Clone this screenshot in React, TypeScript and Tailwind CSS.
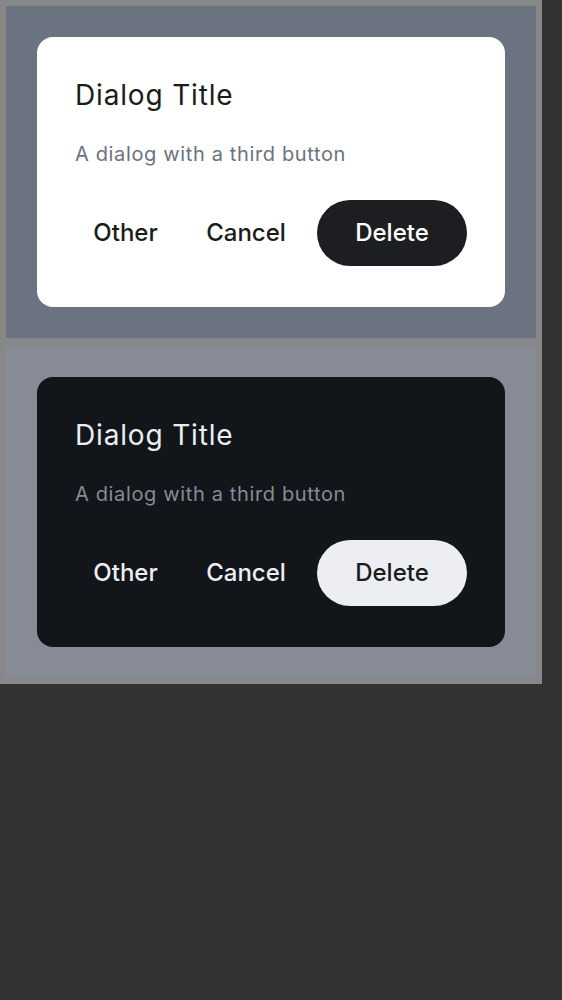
import React from 'react';

type DialogProps = {
  dark?: boolean;
};

function DialogCard({ dark }: DialogProps) {
  const label = dark ? 'text-[#eceef2]' : 'text-[#1b1c20]';
  return (
    <div
      className={`w-full h-[270px] rounded-[16px] pt-[40px] px-[38px] ${
        dark ? 'bg-[#12151a]' : 'bg-white'
      }`}
    >
      <h2 className={`text-[28px] leading-[36px] font-normal tracking-[0.03em] ${label}`}>
        Dialog Title
      </h2>
      <p
        className={`mt-[27px] text-[20px] leading-[28px] tracking-[0.032em] ${
          dark ? 'text-[#868b96]' : 'text-[#6b7280]'
        }`}
      >
        A dialog with a third button
      </p>
      <div className="mt-[32px] flex items-center justify-end gap-[14px]">
        <button className={`h-[66px] w-[99px] text-[24px] font-medium ${label}`}>
          Other
        </button>
        <button className={`h-[66px] w-[114px] text-[24px] font-medium ${label}`}>
          Cancel
        </button>
        <button
          className={`h-[66px] w-[150px] rounded-full text-[24px] font-medium ${
            dark ? 'bg-[#eceef3] text-[#1b1c20]' : 'bg-[#1d1e22] text-white'
          }`}
        >
          Delete
        </button>
      </div>
    </div>
  );
}

export default function App() {
  return (
    <div className="min-h-[1000px] bg-[#333333] font-['Inter',sans-serif]">
      <div className="w-[542px] bg-[#888888] p-[6px] flex flex-col gap-[8px]">
        <div className="h-[332px] bg-[#6b7280] p-[31px]">
          <DialogCard />
        </div>
        <div className="h-[332px] bg-[#868b96] p-[31px]">
          <DialogCard dark />
        </div>
      </div>
    </div>
  );
}
